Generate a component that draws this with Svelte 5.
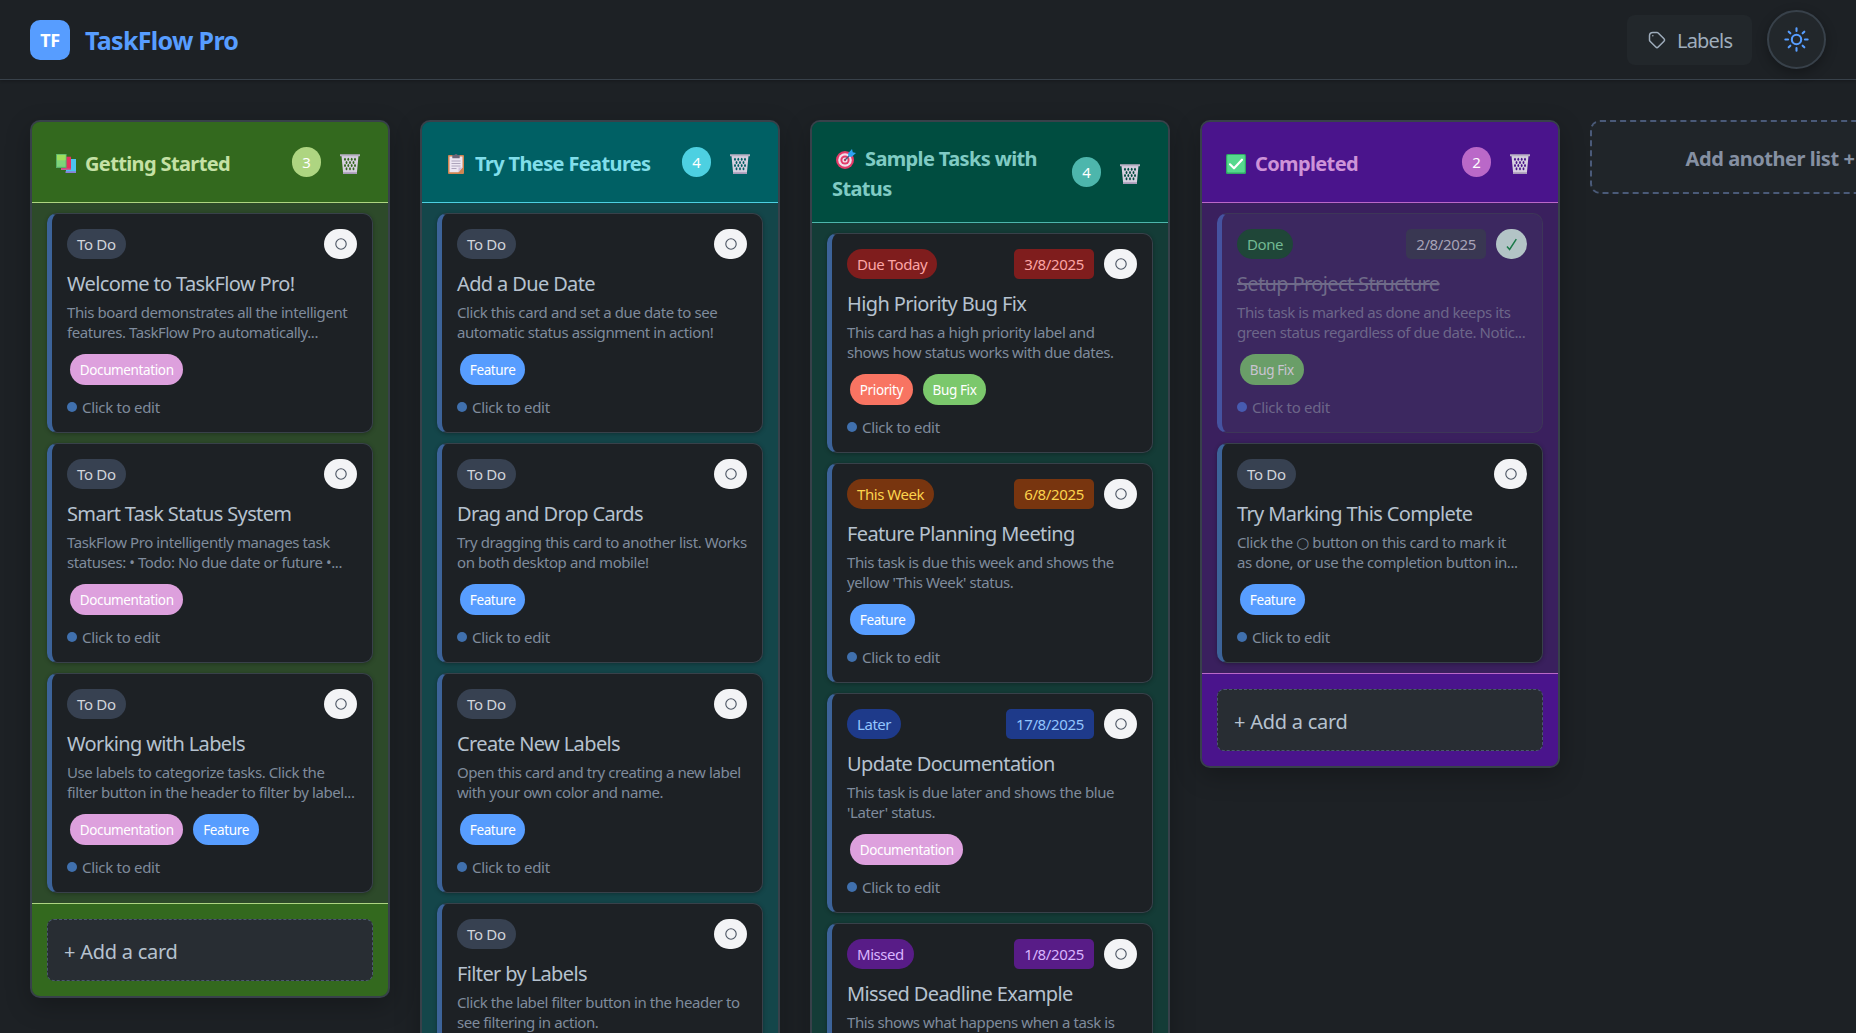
<script>
  const labelsByKey = {
    doc: { name: 'Documentation', tone: 'pink' },
    feat: { name: 'Feature', tone: 'blue' },
    prio: { name: 'Priority', tone: 'red' },
    bug: { name: 'Bug Fix', tone: 'green' }
  };

  const lists = [
    {
      theme: 'lime', icon: 'books', title: ['Getting Started'], count: 3,
      cards: [
        { status: 'To Do', kind: 'todo', title: 'Welcome to TaskFlow Pro!', lines: ['This board demonstrates all the intelligent', 'features. TaskFlow Pro automatically...'], labels: ['doc'] },
        { status: 'To Do', kind: 'todo', title: 'Smart Task Status System', lines: ['TaskFlow Pro intelligently manages task', 'statuses: • Todo: No due date or future •...'], labels: ['doc'] },
        { status: 'To Do', kind: 'todo', title: 'Working with Labels', lines: ['Use labels to categorize tasks. Click the', 'filter button in the header to filter by label...'], labels: ['doc', 'feat'] }
      ]
    },
    {
      theme: 'cyan', icon: 'clipboard', title: ['Try These Features'], count: 4,
      cards: [
        { status: 'To Do', kind: 'todo', title: 'Add a Due Date', lines: ['Click this card and set a due date to see', 'automatic status assignment in action!'], labels: ['feat'] },
        { status: 'To Do', kind: 'todo', title: 'Drag and Drop Cards', lines: ['Try dragging this card to another list. Works', 'on both desktop and mobile!'], labels: ['feat'] },
        { status: 'To Do', kind: 'todo', title: 'Create New Labels', lines: ['Open this card and try creating a new label', 'with your own color and name.'], labels: ['feat'] },
        { status: 'To Do', kind: 'todo', title: 'Filter by Labels', lines: ['Click the label filter button in the header to', 'see filtering in action.'], labels: [] }
      ]
    },
    {
      theme: 'teal', icon: 'target', title: ['Sample Tasks with', 'Status'], count: 4,
      cards: [
        { status: 'Due Today', kind: 'today', date: '3/8/2025', title: 'High Priority Bug Fix', lines: ['This card has a high priority label and', 'shows how status works with due dates.'], labels: ['prio', 'bug'] },
        { status: 'This Week', kind: 'week', date: '6/8/2025', title: 'Feature Planning Meeting', lines: ['This task is due this week and shows the', "yellow 'This Week' status."], labels: ['feat'] },
        { status: 'Later', kind: 'later', date: '17/8/2025', title: 'Update Documentation', lines: ['This task is due later and shows the blue', "'Later' status."], labels: ['doc'] },
        { status: 'Missed', kind: 'missed', date: '1/8/2025', title: 'Missed Deadline Example', lines: ['This shows what happens when a task is'], labels: [] }
      ]
    },
    {
      theme: 'purple', icon: 'check', title: ['Completed'], count: 2,
      cards: [
        { status: 'Done', kind: 'done', date: '2/8/2025', done: true, title: 'Setup Project Structure', lines: ['This task is marked as done and keeps its', 'green status regardless of due date. Notic...'], labels: ['bug'] },
        { status: 'To Do', kind: 'todo', title: 'Try Marking This Complete', lines: ['Click the ○ button on this card to mark it', 'as done, or use the completion button in...'], labels: ['feat'] }
      ]
    }
  ];
</script>

{#snippet listIcon(name)}
  <svg class="emoji" viewBox="0 0 20 20" aria-hidden="true">
    {#if name === 'books'}
      <rect x="10" y="5" width="10" height="14" fill="#4cc3f0" />
      <path d="M9.500 17.300H20V19H9.500z" fill="#8a7fd6" />
      <rect x="5" y="2.7" width="10" height="13.3" fill="#e5315f" />
      <path d="M5 14.600h10V16H5z" fill="#c0609a" />
      <rect x="0" y="0" width="10.600" height="14" fill="#58b06c" />
      <rect x="1" y="0.8" width="8.6" height="12" fill="#7ed479" />
      <rect x="1" y="0.8" width="8.6" height="5.500" fill="#9ddf5c" />
    {:else if name === 'clipboard'}
      <rect x="2" y="1" width="16" height="19" rx="1" fill="#d08552" />
      <path d="M3.5 2.5h13v11l-4 4.8h-9z" fill="#ece6f2" />
      <path d="M12.5 18.3v-4.8h4z" fill="#cfc0dc" />
      <path d="M6.3 1h2q1.7-2 3.4 0h2v3.2H6.3z" fill="#6d6577" />
      <path d="M5.5 7h9M5.5 9.5h9M5.5 12h9M5.5 14.5h5" stroke="#a79db5" stroke-width="0.9" />
    {:else if name === 'target'}
      <circle cx="9" cy="11" r="9" fill="#e43a68" />
      <circle cx="9" cy="11" r="6.8" fill="#f1dfeb" />
      <circle cx="9" cy="11" r="4.6" fill="#e43a68" />
      <circle cx="9" cy="11" r="2.6" fill="#f1dfeb" />
      <circle cx="9" cy="11" r="1.2" fill="#c23b60" />
      <path d="M9 11l6-6" stroke="#4a5a78" stroke-width="1.2" />
      <path d="M12 4.500L16 0l.8 3.200L20 4l-4.500 4-3-.8z" fill="#2ea3f2" />
    {:else}
      <rect x="0" y="0" width="20" height="20" rx="1.5" fill="#2fa866" />
      <rect x="1.2" y="1" width="17.6" height="17.6" rx="1" fill="#56d98e" />
      <path d="M4 10.3l4 4 8-8.6" fill="none" stroke="#fff" stroke-width="2.2" stroke-linecap="round" stroke-linejoin="round" />
    {/if}
  </svg>
{/snippet}

<header class="topbar">
  <div class="brand">
    <div class="logo">TF</div>
    <h1>TaskFlow Pro</h1>
  </div>
  <div class="actions">
    <button class="labels-btn">
      <svg viewBox="0 0 24 24" class="tag-icon" aria-hidden="true">
        <path d="M7 7h.01M7 3h5c.512 0 1.024.195 1.414.586l7 7a2 2 0 010 2.828l-7 7a2 2 0 01-2.828 0l-7-7A1.994 1.994 0 013 12V7a4 4 0 014-4z" />
      </svg>
      <span>Labels</span>
    </button>
    <button class="theme-btn" aria-label="Toggle theme">
      <svg viewBox="0 0 24 24" class="sun-icon" aria-hidden="true">
        <circle cx="12" cy="12" r="4.5" />
        <path d="M12 1.300v2.600M12 20.100v2.600M4.500 4.500l1.600 1.600M17.900 17.900l1.600 1.600M1.300 12h2.600M20.100 12h2.600M4.500 19.500l1.600-1.600M17.900 6.100l1.600-1.600" />
      </svg>
    </button>
  </div>
</header>

<main class="board">
  {#each lists as list}
    <section class="list {list.theme}">
      <div class="list-head">
        <h3>
          {@render listIcon(list.icon)}{#each list.title as part, i}{#if i}<br />{/if}<span>{part}</span>{/each}
        </h3>
        <span class="count">{list.count}</span>
        <button class="trash" aria-label="Delete list">
          <svg viewBox="0 0 20 20" aria-hidden="true">
            <path d="M1.500 2h17l-1.700 18H3.200z" fill="#d6cfdf" />
            <g class="holes">
              {#each [4.2, 7.4, 10.6, 13.8] as y, row}
                {#each row % 2 ? [6.500, 10, 13.500] : [5, 8.300, 11.700, 15] as x}
                  <ellipse cx={x} cy={y + 1} rx="0.9" ry="1.5" />
                {/each}
              {/each}
            </g>
            <path d="M0 .3h20v1.900H0z" fill="#b9b1c4" />
            <path d="M3 18.300h14l-.2 1.700H3.200z" fill="#a89bb8" />
          </svg>
        </button>
      </div>

      <div class="cards">
        {#each list.cards as card}
          <article class="card" class:done={card.done}>
            <div class="card-top">
              <span class="status {card.kind}">{card.status}</span>
              <span class="spacer"></span>
              {#if card.date}<span class="date {card.kind}">{card.date}</span>{/if}
              <button class="toggle" class:checked={card.done} aria-label="Toggle complete">
                {#if card.done}
                  <svg viewBox="0 0 12 13" class="tick"><path d="M1 8.500L3.600 11.500 10.300 1.200" /></svg>
                {:else}
                  <svg viewBox="0 0 12 12" class="ring"><circle cx="6" cy="6" r="5.2" /></svg>
                {/if}
              </button>
            </div>
            <h4>{card.title}</h4>
            <p>
              {#each card.lines as line, i}
                {#if i}<br />{/if}{#each line.split('○') as piece, j}{#if j}<span class="glyph">○</span>{/if}{piece}{/each}
              {/each}
            </p>
            {#if card.labels.length}
              <div class="tags">
                {#each card.labels as key}
                  <span class="tag {labelsByKey[key].tone}">{labelsByKey[key].name}</span>
                {/each}
              </div>
              <div class="hint"><i></i><span>Click to edit</span></div>
            {/if}
          </article>
        {/each}
      </div>

      {#if list.cards.length < 4}
        <div class="list-foot">
          <button class="add-card">+ Add a card</button>
        </div>
      {/if}
    </section>
  {/each}

  <button class="add-list">Add another list +</button>
</main>

<style>
  :global(html), :global(body) {
    margin: 0;
    background: #1d2125;
    overflow: hidden;
  }
  :global(#app) {
    height: 1033px;
    overflow: hidden;
    font-family: 'Noto Sans', 'Open Sans', sans-serif;
    color: #b6c2cf;
  }
  h1, h3, h4, p { margin: 0; }
  button { font-family: inherit; border: 0; padding: 0; margin: 0; }
  * { box-sizing: border-box; }

  .topbar {
    height: 80px;
    padding: 0 30px;
    display: flex;
    align-items: center;
    justify-content: space-between;
    border-bottom: 1px solid #38414a;
    box-shadow: 0 1px 3px rgba(0, 0, 0, 0.25);
  }
  .brand { display: flex; align-items: center; gap: 15px; }
  .logo {
    width: 40px;
    height: 40px;
    border-radius: 10px;
    background: #579dff;
    color: #fff;
    font-weight: 700;
    font-size: 18px;
    line-height: 40px;
    text-align: center;
    letter-spacing: -0.4px;
  }
  h1 { font-size: 25px; line-height: 35px; font-weight: 700; color: #579dff; letter-spacing: -0.68px; padding-top: 2px; }
  .actions { display: flex; align-items: center; gap: 15px; }
  .labels-btn {
    width: 125px;
    height: 50px;
    border-radius: 8px;
    background: #22272b;
    color: #9fadbc;
    font-size: 20px;
    display: flex;
    align-items: center;
    gap: 10px;
    padding-left: 20px;
    letter-spacing: -0.8px;
  }
  .labels-btn span { padding-top: 2px; }
  .tag-icon { width: 20px; height: 20px; fill: none; stroke: #9fadbc; stroke-width: 1.8; stroke-linecap: round; stroke-linejoin: round; }
  .theme-btn {
    width: 59px;
    height: 59px;
    border-radius: 50%;
    border: 2px solid #38414a;
    background: #22272b;
    box-shadow: 0 4px 12px rgba(0, 0, 0, 0.3);
    display: grid;
    place-items: center;
  }
  .sun-icon { width: 25px; height: 25px; fill: none; stroke: #579dff; stroke-width: 2; stroke-linecap: round; }

  .board { display: flex; align-items: flex-start; gap: 30px; padding: 40px 30px; }
  .list {
    flex: 0 0 360px;
    border: 2px solid #38414a;
    border-radius: 10px;
    overflow: hidden;
    background: var(--body);
    box-shadow: 0 8px 24px rgba(0, 0, 0, 0.25);
  }
  .lime { --head: #33691e; --body: #2d4a2a; --text: #c5e1a5; --line: #aed581; }
  .cyan { --head: #006064; --body: #14464a; --text: #80deea; --line: #4dd0e1; }
  .teal { --head: #004d40; --body: #143c37; --text: #80cbc4; --line: #4db6ac; }
  .purple { --head: #4a148c; --body: #3a205e; --text: #ce93d8; --line: #ba68c8; }

  .list-head {
    display: flex;
    align-items: center;
    padding: 20px 18px 20px 20px;
    background: var(--head);
    border-bottom: 1px solid var(--line);
  }
  h3 { flex: 1; font-size: 20px; line-height: 30px; font-weight: 700; color: var(--text); letter-spacing: -0.63px; padding-top: 2px; margin-bottom: -2px; white-space: nowrap; }
  .emoji { width: 20px; height: 20px; margin: 0 9px 0 4px; vertical-align: -3px; }
  .count {
    width: 29px;
    height: 30px;
    border-radius: 15px;
    background: var(--line);
    color: #fff;
    font-size: 15px;
    line-height: 30px;
    text-align: center;
  }
  .trash { width: 40px; height: 40px; margin-left: 9px; background: none; display: grid; place-items: center; }
  .trash svg { width: 20px; height: 20px; margin-top: 4px; }
  .holes { fill: var(--head); }

  .cards { display: flex; flex-direction: column; gap: 10px; padding: 10px 15px; }
  .card {
    height: 220px;
    padding: 15px;
    border: 1px solid #38414a;
    border-left: 5px solid #3c6399;
    border-radius: 10px;
    background: #1d2125;
    box-shadow: 0 1px 4px rgba(0, 0, 0, 0.3);
  }
  .card-top { display: flex; height: 30px; gap: 10px; font-size: 15px; line-height: 30px; letter-spacing: -0.35px; }
  .spacer { flex: 1; }
  .status { padding: 0 10px; border-radius: 15px; letter-spacing: -0.45px; }
  .date { padding: 0 10px; border-radius: 5px; margin-left: -10px; }
  .todo { background: #374151; color: #d1d5db; letter-spacing: -0.3px; }
  .today { background: #7f1d1d; color: #fca5a5; }
  .week { background: #78350f; color: #fcd34d; }
  .later { background: #1e3a8a; color: #93c5fd; }
  .missed { background: #581c87; color: #d8b4fe; }
  .status.done { background: #1f4638; color: #72b893; }
  .date.done { background: #393752; color: #a7a3b8; }
  .toggle { width: 33px; height: 30px; border-radius: 15px; background: #f3f4f6; display: grid; place-items: center; }
  .toggle.checked { width: 31px; background: #b3c4c6; }
  .ring { width: 12px; height: 12px; fill: none; stroke: #4b5563; stroke-width: 1.1; }
  .tick { width: 12px; height: 13px; fill: none; stroke: #1b7a49; stroke-width: 1.5; }
  h4 { font-size: 20px; line-height: 28px; font-weight: 400; color: #b6c2cf; letter-spacing: -0.63px; padding-top: 11px; white-space: nowrap; }
  p { font-size: 15px; line-height: 20px; color: #7f8b9c; letter-spacing: -0.42px; margin-top: 4px; white-space: nowrap; }
  .glyph { font-family: 'DejaVu Sans', sans-serif; font-size: 15px; line-height: 1; }
  .tags { display: flex; gap: 10px; padding: 0 3px; margin-top: 12px; }
  .tag { height: 31px; padding: 0 9.8px; border-radius: 15.5px; color: #fff; font-size: 13.5px; line-height: 32px; letter-spacing: -0.38px; }
  .pink { background: #dda0dd; }
  .blue { background: #579dff; }
  .red { background: #f87462; }
  .green { background: #7bc86c; }
  .hint { display: flex; align-items: center; gap: 5px; margin-top: 12px; font-size: 15px; line-height: 20px; color: #7f8b9c; letter-spacing: -0.3px; }
  .hint i { width: 10px; height: 10px; border-radius: 50%; background: #4070ad; }

  .card.done { background: #3c2860; border-color: #3d3658; border-left-color: #4553a0; box-shadow: none; }
  .card.done h4 { color: #6f6b89; text-decoration: line-through; }
  .card.done p, .card.done .hint { color: #6c6689; }
  .card.done .hint i { background: #475bb0; }
  .card.done .tag { background: #6a9e68; color: #c9c4d1; }

  .list-foot { padding: 15px; background: var(--head); border-top: 1px solid var(--line); }
  .add-card {
    display: block;
    width: 100%;
    height: 62px;
    padding: 2px 16px 0;
    border: 1px dashed #4b5870;
    border-radius: 7px;
    background: #282d33;
    color: #b6c2cf;
    font-size: 20px;
    text-align: left;
    letter-spacing: -0.25px;
  }
  .add-list {
    flex: 0 0 360px;
    height: 74px;
    padding-top: 2px;
    border: 2px dashed #4a5a78;
    border-radius: 10px;
    background: #202529;
    color: #8590a2;
    font-size: 20px;
    font-weight: 700;
    letter-spacing: -0.45px;
  }
</style>
